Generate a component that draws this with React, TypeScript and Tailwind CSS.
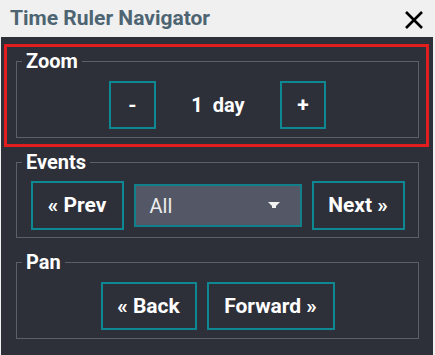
import React, { useState } from 'react';

const btn =
  'flex items-center justify-center border-2 border-[#0e8994] bg-[#2d2f39] text-white font-bold text-[21px] leading-none';

const Fieldset: React.FC<{ title: string; className?: string; children: React.ReactNode }> = ({
  title,
  className,
  children,
}) => (
  <fieldset className={`border border-[#5c5f6b] w-[403px] ${className ?? ''}`}>
    <legend className="ml-[5px] px-[4px] text-white font-bold text-[20px] leading-[20px]">{title}</legend>
    {children}
  </fieldset>
);

const App: React.FC = () => {
  const [days, setDays] = useState(1);
  const [filter] = useState('All');

  return (
    <div
      className="w-[435px] h-[355px] flex flex-col border-l border-r-2 border-[#f0f0f0] bg-[#2d2f39] overflow-hidden"
      style={{ fontFamily: 'Roboto, "Liberation Sans", sans-serif' }}
    >
      {/* title bar */}
      <div className="h-[37px] shrink-0 bg-[#f0f0f0] flex items-center justify-between pl-[9px] pr-[10px]">
        <span className="text-[21px] font-bold text-[#4d6472] leading-none">Time Ruler Navigator</span>
        <svg width="18" height="18" viewBox="0 0 18 18" className="mt-[2px]">
          <path d="M1 1 L17 17 M17 1 L1 17" stroke="#000" strokeWidth="2.6" />
        </svg>
      </div>

      {/* zoom section, highlighted */}
      <div className="mt-[7px] ml-[3px] w-[425px] border-[3px] border-[#e11d1d] pt-[4px] pb-[6px] pl-[9px]">
        <Fieldset title="Zoom" className="pt-[10px] pb-[8px]">
          <div className="flex justify-center items-center">
            <button className={`${btn} w-[47px] h-[48px]`} onClick={() => setDays(Math.max(1, days - 1))}>
              -
            </button>
            <span className="w-[124px] text-center text-white font-bold text-[20px] leading-none">
              {days}&nbsp;&nbsp;day
            </span>
            <button className={`${btn} w-[46px] h-[48px]`} onClick={() => setDays(days + 1)}>
              +
            </button>
          </div>
        </Fieldset>
      </div>

      {/* events */}
      <Fieldset title="Events" className="mt-[5px] ml-[15px] pt-[9px] pb-[7px]">
        <div className="flex justify-center items-center gap-[10px]">
          <button className={`${btn} w-[93px] h-[49px]`}>« Prev</button>
          <div className="w-[168px] h-[43px] bg-[#545866] border-2 border-[#12808b] flex items-center justify-between pl-[14px] pr-[20px]">
            <span className="text-[20px] text-[#ececec] leading-none">{filter}</span>
            <svg width="12" height="7" viewBox="0 0 12 7">
              <path d="M0 0 H12 L8 4 V6 H4 V4 Z" fill="#f2f2f2" />
            </svg>
          </div>
          <button className={`${btn} w-[93px] h-[49px]`}>Next »</button>
        </div>
      </Fieldset>

      {/* pan */}
      <Fieldset title="Pan" className="mt-[14px] ml-[15px] pt-[10px] pb-[8px]">
        <div className="flex justify-center items-center gap-[10px]">
          <button className={`${btn} w-[96px] h-[48px]`}>« Back</button>
          <button className={`${btn} w-[128px] h-[48px]`}>Forward »</button>
        </div>
      </Fieldset>
    </div>
  );
};

export default App;
